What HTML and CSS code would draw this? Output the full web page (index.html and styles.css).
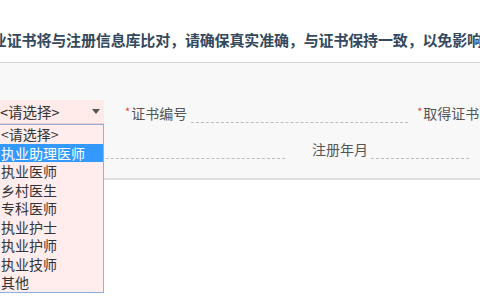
FILE: index.html
```
<!DOCTYPE html>
<html lang="zh-CN">
<head>
    <meta charset="UTF-8">
    <title>执业证书信息</title>
    <link rel="stylesheet" href="styles.css">
</head>
<body>
    <div class="notice">
        <p>执业证书将与注册信息库比对，请确保真实准确，与证书保持一致，以免影响审核</p>
    </div>

    <div class="panel">
        <div class="row">
            <div class="select-box">
                <span>&lt;请选择&gt;</span>
                <i class="arrow"></i>
            </div>
            <div class="field field-no">
                <div class="label"><span class="req">*</span>证书编号</div>
                <div class="line"></div>
            </div>
            <div class="field field-date">
                <div class="label"><span class="req">*</span>取得证书日期</div>
                <div class="line"></div>
            </div>
        </div>
        <div class="row row-2">
            <div class="field field-left">
                <div class="line"></div>
            </div>
            <div class="field field-reg">
                <div class="label">注册年月</div>
                <div class="line"></div>
            </div>
        </div>

        <!-- 下拉列表 -->
        <ul class="dropdown">
            <li>&lt;请选择&gt;</li>
            <li class="active">执业助理医师</li>
            <li>执业医师</li>
            <li>乡村医生</li>
            <li>专科医师</li>
            <li>执业护士</li>
            <li>执业护师</li>
            <li>执业技师</li>
            <li>其他</li>
        </ul>
    </div>
</body>
</html>
```

FILE: styles.css
```
html, body {
    height: 100%;
}
body {
    font-family: "Noto Sans CJK SC", "Noto Sans", sans-serif;
    margin: 0;
    padding: 0;
    background-color: #fff;
    color: #333;
}
.notice {
    height: 62px;
    border-bottom: 1px solid #d2d2d2;
    overflow: hidden;
}
.notice p {
    margin: 0 0 0 -23px;
    padding-top: 31px;
    font-size: 15px;
    line-height: 18px;
    font-weight: bold;
    color: #34495e;
    white-space: nowrap;
    letter-spacing: -0.15px;
}
.panel {
    position: relative;
    z-index: 1;
    height: 117px;
    background-color: #f8f8f8;
    border-bottom: 2px solid #dedede;
    padding-top: 37px;
    box-sizing: border-box;
}
.row {
    display: flex;
    align-items: flex-end;
    height: 24px;
    white-space: nowrap;
    overflow: hidden;
}
.row-2 {
    margin-top: 12px;
}
.select-box {
    width: 104px;
    height: 24px;
    flex: none;
    display: flex;
    align-items: center;
    justify-content: space-between;
    background-color: #ffeaea;
    border-bottom: 1px solid #f3caca;
    box-sizing: border-box;
    font-size: 14.5px;
    color: #333;
    padding-right: 4px;
}
.arrow {
    width: 0;
    height: 0;
    border-left: 4px solid transparent;
    border-right: 4px solid transparent;
    border-top: 5px solid #555;
}
.field {
    display: flex;
    align-items: flex-end;
    flex: none;
}
.label {
    font-size: 14px;
    line-height: 22px;
    color: #555;
}
.req {
    color: #f03c3c;
    font-size: 11px;
    vertical-align: 3px;
    margin-right: 1px;
}
.line {
    height: 1px;
    margin-bottom: 1px;
    border-bottom: 1px dashed #bdbdbd;
}
.field-no {
    margin-left: 21px;
}
.field-no .line {
    width: 217px;
    margin-left: 4px;
}
.field-date {
    margin-left: 9px;
}
.field-left .line {
    width: 265px;
    margin-left: 20px;
}
.field-reg {
    margin-left: 27px;
}
.field-reg .line {
    width: 98px;
    margin-left: 3px;
}
.dropdown {
    position: absolute;
    z-index: 5;
    left: -1px;
    top: 61px;
    width: 103px;
    margin: 0;
    padding: 0;
    list-style: none;
    background-color: #ffecec;
    border: 1px solid #8fb0e0;
}
.dropdown li {
    height: 18.5px;
    line-height: 18.5px;
    font-size: 14px;
    color: #333;
    padding-left: 1px;
}
.dropdown li.active {
    background-color: #3399ff;
    color: #fff;
}
```
